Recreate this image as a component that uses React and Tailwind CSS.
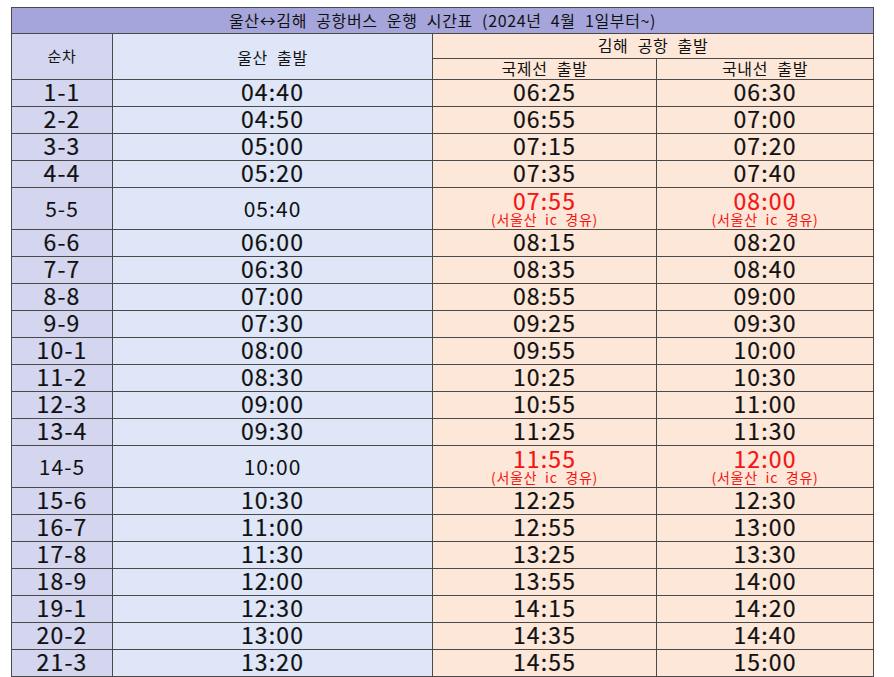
const rows = [
  ['1-1', '04:40', '06:25', '06:30'],
  ['2-2', '04:50', '06:55', '07:00'],
  ['3-3', '05:00', '07:15', '07:20'],
  ['4-4', '05:20', '07:35', '07:40'],
  ['5-5', '05:40', '07:55', '08:00', true],
  ['6-6', '06:00', '08:15', '08:20'],
  ['7-7', '06:30', '08:35', '08:40'],
  ['8-8', '07:00', '08:55', '09:00'],
  ['9-9', '07:30', '09:25', '09:30'],
  ['10-1', '08:00', '09:55', '10:00'],
  ['11-2', '08:30', '10:25', '10:30'],
  ['12-3', '09:00', '10:55', '11:00'],
  ['13-4', '09:30', '11:25', '11:30'],
  ['14-5', '10:00', '11:55', '12:00', true],
  ['15-6', '10:30', '12:25', '12:30'],
  ['16-7', '11:00', '12:55', '13:00'],
  ['17-8', '11:30', '13:25', '13:30'],
  ['18-9', '12:00', '13:55', '14:00'],
  ['19-1', '12:30', '14:15', '14:20'],
  ['20-2', '13:00', '14:35', '14:40'],
  ['21-3', '13:20', '14:55', '15:00'],
]

const cell = 'border border-[#4a4a4a] p-0 text-center align-middle'
const head = 'font-normal tracking-[0.04em] [word-spacing:5px]'
// a touch heavier than regular, lighter than bold
const big = 'text-[23px] leading-[20px] pb-[4px] tracking-[0.05em] font-normal [-webkit-text-stroke:0.2px]'
const mid = 'text-[21px] leading-[20px] pb-[2px] tracking-[0.05em]'

function ViaCell({ time }) {
  return (
    <td className={`${cell} bg-[#fde7d8] text-[#f41414]`}>
      <div className="text-[23px] leading-[22px] tracking-[0.05em] [-webkit-text-stroke:0.2px]">{time}</div>
      <div className="text-[14px] leading-[16px] pb-[2px] tracking-[0.05em] [word-spacing:4px]">(서울산 ic 경유)</div>
    </td>
  )
}

export default function App() {
  return (
    <div className="bg-white min-h-screen pt-[7px] pl-[11px] font-['Noto_Sans_CJK_KR','Noto_Sans',sans-serif] text-[#111]">
      <table className="table-fixed border-collapse w-[862px]">
        <colgroup>
          <col className="w-[101px]" />
          <col className="w-[320px]" />
          <col className="w-[224px]" />
          <col className="w-[217px]" />
        </colgroup>
        <thead>
          <tr className="h-[26px]">
            <th colSpan={4} className={`${cell} ${head} bg-[#a5a5db] text-[16px] leading-[18px] pb-[2px]`}>
              울산↔김해 공항버스 운행 시간표 (2024년 4월 1일부터~)
            </th>
          </tr>
          <tr className="h-[25px]">
            <th rowSpan={2} className={`${cell} ${head} bg-[#d4d5ef] text-[15px]`}>순차</th>
            <th rowSpan={2} className={`${cell} ${head} bg-[#dee6f7] text-[16px]`}>울산 출발</th>
            <th colSpan={2} className={`${cell} ${head} bg-[#fde7d8] text-[16px] leading-[18px] pb-[2px]`}>김해 공항 출발</th>
          </tr>
          <tr className="h-[21px]">
            <th className={`${cell} ${head} bg-[#fde7d8] text-[16px] leading-[17px] pb-[2px]`}>국제선 출발</th>
            <th className={`${cell} ${head} bg-[#fde7d8] text-[16px] leading-[17px] pb-[2px]`}>국내선 출발</th>
          </tr>
        </thead>
        <tbody>
          {rows.map(([no, ulsan, intl, dom, via]) => (
            <tr key={no} className={via ? 'h-[42px]' : 'h-[27px]'}>
              <td className={`${cell} bg-[#d4d5ef] ${via ? mid : big}`}>{no}</td>
              <td className={`${cell} bg-[#dee6f7] ${via ? mid : big}`}>{ulsan}</td>
              {via ? (
                <>
                  <ViaCell time={intl} />
                  <ViaCell time={dom} />
                </>
              ) : (
                <>
                  <td className={`${cell} bg-[#fde7d8] ${big}`}>{intl}</td>
                  <td className={`${cell} bg-[#fde7d8] ${big}`}>{dom}</td>
                </>
              )}
            </tr>
          ))}
        </tbody>
      </table>
    </div>
  )
}
